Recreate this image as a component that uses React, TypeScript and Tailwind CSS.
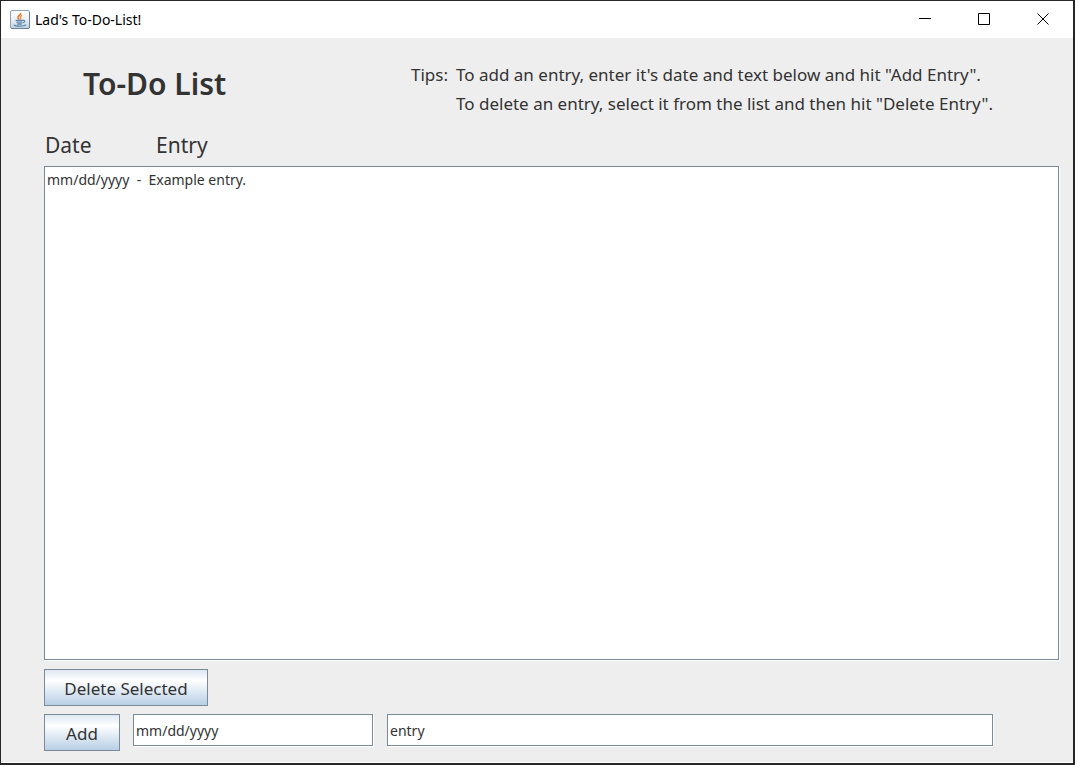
import { useState } from "react";
import type { FormEvent } from "react";

type Entry = { id: number; date: string; text: string };

function JavaIcon() {
  return (
    <svg width="20" height="20" viewBox="0 0 20 20" aria-hidden="true">
      <defs>
        <linearGradient id="tile" x1="0" y1="0" x2="0" y2="1">
          <stop offset="0" stopColor="#ffffff" />
          <stop offset="0.5" stopColor="#edf1f5" />
          <stop offset="1" stopColor="#bccfde" />
        </linearGradient>
      </defs>
      <rect x="0.5" y="0.5" width="19" height="18" rx="1.5" fill="url(#tile)" stroke="#8fa3b5" />
      <path d="M1 18.5h18M19.5 2v16" stroke="#6a8399" />
      <path d="M10.6 3c.8 2.2-3.6 2.8-2.6 5 .3.7 1 1 1 1.6" fill="none" stroke="#e8782a" strokeWidth="1.6" />
      <path d="M12 5.4c-2 .9-2 1.7-1.4 2.5.3.6.1 1.1-.4 1.7" fill="none" stroke="#ee9250" strokeWidth="1.5" />
      <path d="M5.6 10.4h7.6M6.4 12.2h6M7.2 14h4.6" stroke="#5f86a8" strokeWidth="1.3" />
      <path d="M13 10.4c2.5-.5 2.5 1.8-.4 2.4" fill="none" stroke="#5f86a8" strokeWidth="1.2" />
      <path d="M4 14.8c1.5 1.8 10 1.8 12-.2" fill="none" stroke="#5f86a8" strokeWidth="1.3" />
    </svg>
  );
}

function WindowButton({ label, path }: { label: string; path: string }) {
  return (
    <button type="button" aria-label={label} className="flex w-[59px] items-center pb-px pl-[23px] hover:bg-[#e5e5e5]">
      <svg width="12" height="12" viewBox="0 0 12 12" fill="none" stroke="#000" aria-hidden="true">
        <path d={path} />
      </svg>
    </button>
  );
}

const buttonClass =
  "h-[37px] border border-[#7a8a99] bg-linear-to-b from-[#dde8f3] via-white via-30% to-[#b8cfe5] pt-[2px] text-[17px]";
const fieldClass =
  "h-8 border border-[#7a8a99] bg-white px-[2px] text-sm shadow-[1px_1px_0_#ffffff] outline-none";

export default function App() {
  const [entries, setEntries] = useState<Entry[]>([{ id: 1, date: "mm/dd/yyyy", text: "Example entry." }]);
  const [selected, setSelected] = useState<number | null>(null);
  const [date, setDate] = useState("mm/dd/yyyy");
  const [text, setText] = useState("entry");

  const addEntry = (event: FormEvent) => {
    event.preventDefault();
    setEntries([...entries, { id: Date.now(), date, text }]);
  };

  const deleteSelected = () => {
    setEntries(entries.filter((entry) => entry.id !== selected));
    setSelected(null);
  };

  return (
    <div className="flex min-h-screen flex-col border-t border-r-2 border-b-2 border-l border-[#262626] bg-[#eeeeee] font-['Noto_Sans','Open_Sans',sans-serif] text-[#333333]">
      <header className="flex h-[37px] justify-between bg-white text-black">
        <div className="flex items-center gap-[5px] pl-[9px]">
          <JavaIcon />
          <span className="text-sm">Lad's To-Do-List!</span>
        </div>
        <div className="flex">
          <WindowButton label="Minimize" path="M0 5.5h12" />
          <WindowButton label="Maximize" path="M.5.5h11v11h-11z" />
          <WindowButton label="Close" path="M.5.5l11 11M11.5.5l-11 11" />
        </div>
      </header>

      <main className="flex grow flex-col border-b border-white pr-[14px] pb-[11px] pl-[43px]">
        <div className="flex pt-[22px]">
          <h1 className="w-[367px] shrink-0 pt-1 pl-[39px] text-[30px] leading-10 font-semibold">To-Do List</h1>
          <div className="flex gap-[8px] text-[17px] leading-[29px]">
            <span>Tips:</span>
            <div>
              <p>To add an entry, enter it's date and text below and hit "Add Entry".</p>
              <p>To delete an entry, select it from the list and then hit "Delete Entry".</p>
            </div>
          </div>
        </div>

        <div className="mt-[11px] flex pb-[5px] pl-px text-[21px] leading-8">
          <h2 className="w-[111px]">Date</h2>
          <h2>Entry</h2>
        </div>

        <ul className="grow border border-[#7a8a99] bg-white px-[2px] pt-[3px] text-sm shadow-[1px_1px_0_#ffffff]">
          {entries.map((entry) => (
            <li key={entry.id}>
              <button
                type="button"
                aria-pressed={entry.id === selected}
                onClick={() => setSelected(entry.id)}
                className="block w-full text-left whitespace-pre aria-pressed:bg-[#b8cfe5]"
              >
                {`${entry.date}  -  ${entry.text}`}
              </button>
            </li>
          ))}
        </ul>

        <div className="mt-[9px]">
          <button type="button" onClick={deleteSelected} className={`${buttonClass} w-[164px]`}>
            Delete Selected
          </button>
        </div>

        <form onSubmit={addEntry} className="mt-2 flex items-start pr-[66px]">
          <button type="submit" className={`${buttonClass} mr-[13px] w-[76px]`}>
            Add
          </button>
          <input
            aria-label="Date"
            value={date}
            onChange={(event) => setDate(event.target.value)}
            className={`${fieldClass} mr-[14px] w-60`}
          />
          <input
            aria-label="Entry"
            value={text}
            onChange={(event) => setText(event.target.value)}
            className={`${fieldClass} min-w-0 grow`}
          />
        </form>
      </main>
    </div>
  );
}
